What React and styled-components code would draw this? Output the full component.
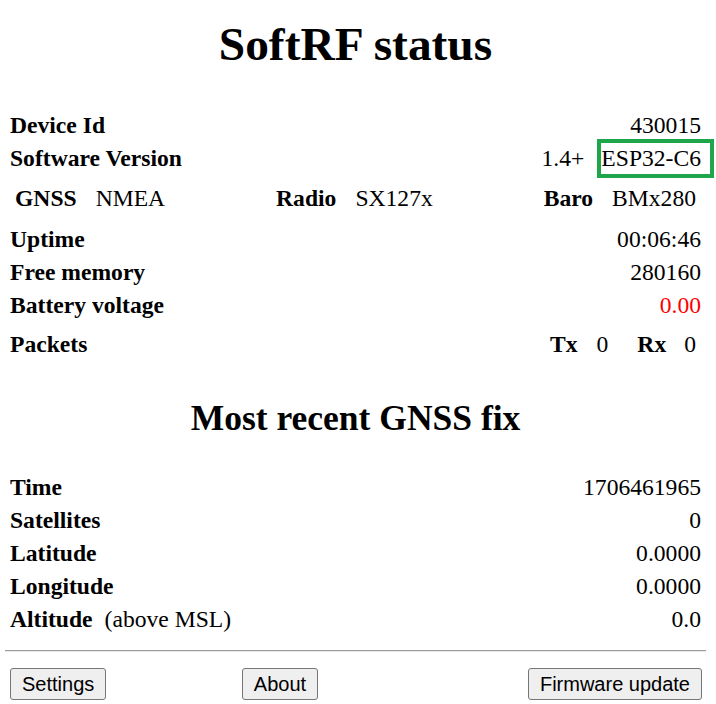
import React from 'react'
import styled, { createGlobalStyle } from 'styled-components'

const GlobalStyle = createGlobalStyle`
  body {
    margin: 0;
    background: #ffffff;
    color: #000000;
    font-family: "Liberation Serif", "Times New Roman", serif;
    font-size: 23.6px;
  }
`

const Page = styled.div`
  width: 716px;
  box-sizing: border-box;
  padding: 0 10px 0 5px;
`

const Title = styled.h1`
  margin: 16.5px 0 0;
  font-size: 47.4px;
  line-height: 55px;
  text-align: center;
  font-weight: bold;
`

const Heading = styled.h2`
  margin: ${({ top }) => top}px 0 0;
  font-size: 35.5px;
  line-height: 40px;
  text-align: center;
  font-weight: bold;
`

const Table = styled.div`
  margin-top: ${({ top }) => top}px;
`

const Row = styled.div`
  display: flex;
  justify-content: space-between;
  align-items: baseline;
  height: 33px;
  line-height: 33px;
  padding: 0 ${({ inset }) => inset || 5}px;
`

const Label = styled.span`
  font-weight: bold;
`

const Note = styled.span`
  margin-left: 12px;
`

const Value = styled.span`
  color: ${({ color }) => color || '#000000'};
`

const Pair = styled.span`
  display: flex;
  gap: 19px;
`

const Version = styled.span`
  display: flex;
  gap: 17px;
`

const Boxed = styled.span`
  position: relative;
  display: inline-block;

  &::after {
    content: '';
    position: absolute;
    top: -2.5px;
    bottom: -3.5px;
    left: -4px;
    right: -13px;
    border: 4px solid #1fa64a;
  }
`

const Counters = styled.span`
  display: flex;
  padding-right: 5px;
`

const Count = styled.span`
  margin-left: ${({ gap }) => gap}px;
`

const Rule = styled.hr`
  margin: 14.5px 0 0;
  height: 0;
  border: 0;
  border-top: 1px solid #9a9a9a;
  border-bottom: 1px solid #e8e8e8;
`

const Buttons = styled.div`
  display: grid;
  grid-template-columns: 190px 160px 1fr;
  margin-top: 16px;
  padding: 0 4px 0 5px;
`

const Button = styled.button`
  justify-self: ${({ align }) => align};
  font-family: "Liberation Sans", Arial, sans-serif;
  font-size: 20px;
  line-height: 22px;
  padding: 4px 11px;
  color: #000000;
  background: #efefef;
  border: 1px solid #767676;
  border-radius: 3px;
`

export default function App() {
  return (
    <Page>
      <GlobalStyle />
      <Title>SoftRF status</Title>

      <Table top={37}>
        <Row><Label>Device Id</Label><Value>430015</Value></Row>
        <Row>
          <Label>Software Version</Label>
          <Version><span>1.4+</span><Boxed>ESP32-C6</Boxed></Version>
        </Row>
      </Table>

      <Table top={7}>
        <Row inset={10}>
          <Pair><Label>GNSS</Label><Value>NMEA</Value></Pair>
          <Pair><Label>Radio</Label><Value>SX127x</Value></Pair>
          <Pair><Label>Baro</Label><Value>BMx280</Value></Pair>
        </Row>
      </Table>

      <Table top={8}>
        <Row><Label>Uptime</Label><Value>00:06:46</Value></Row>
        <Row><Label>Free memory</Label><Value>280160</Value></Row>
        <Row><Label>Battery voltage</Label><Value color="#ff0000">0.00</Value></Row>
      </Table>

      <Table top={6}>
        <Row>
          <Label>Packets</Label>
          <Counters>
            <Label>Tx</Label>
            <Count gap={19}>0</Count>
            <Count gap={29}><Label>Rx</Label></Count>
            <Count gap={18}>0</Count>
          </Counters>
        </Row>
      </Table>

      <Heading top={37.5}>Most recent GNSS fix</Heading>

      <Table top={32.5}>
        <Row><Label>Time</Label><Value>1706461965</Value></Row>
        <Row><Label>Satellites</Label><Value>0</Value></Row>
        <Row><Label>Latitude</Label><Value>0.0000</Value></Row>
        <Row><Label>Longitude</Label><Value>0.0000</Value></Row>
        <Row>
          <span><Label>Altitude</Label><Note>(above MSL)</Note></span>
          <Value>0.0</Value>
        </Row>
      </Table>

      <Rule />

      <Buttons>
        <Button align="start">Settings</Button>
        <Button align="center">About</Button>
        <Button align="end">Firmware update</Button>
      </Buttons>
    </Page>
  )
}
